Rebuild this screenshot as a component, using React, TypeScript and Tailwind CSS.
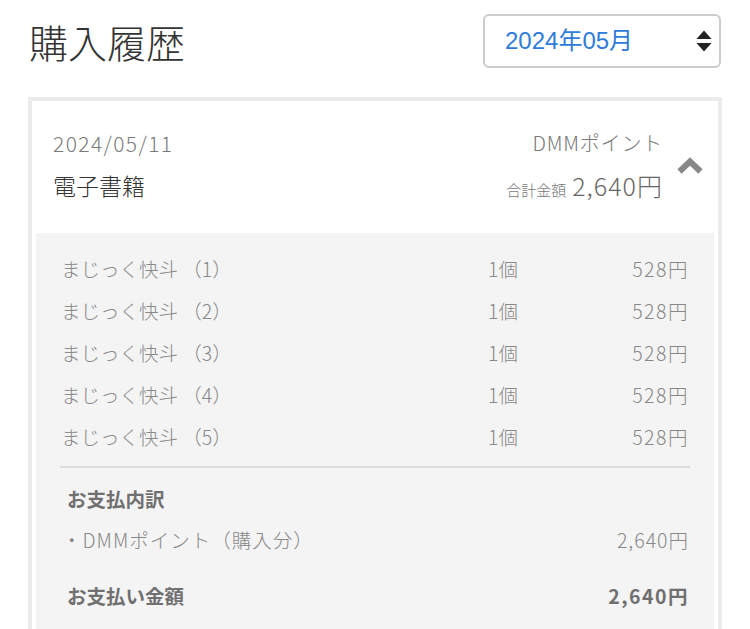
import React from "react";

const items = [1, 2, 3, 4, 5].map((n) => ({ name: `まじっく快斗 （${n}）`, qty: "1個", price: "528円" }));

function ChevronUp() {
  return (
    <svg width="26" height="17" viewBox="0 0 26 17" className="block">
      <path d="M2.5 14.5 L13 4.5 L23.5 14.5" fill="none" stroke="#888888" strokeWidth="6" strokeLinejoin="miter" />
    </svg>
  );
}

function SelectArrows() {
  return (
    <svg width="16" height="22" viewBox="0 0 16 22" className="block">
      <path d="M8 0.5 L15.5 9 L0.5 9 Z" fill="#222" />
      <path d="M0.5 13 L15.5 13 L8 21.5 Z" fill="#222" />
    </svg>
  );
}

export default function App() {
  return (
    <div
      className="w-[750px] h-[629px] overflow-hidden bg-white [text-spacing-trim:space-all]"
      style={{ fontFamily: '"Noto Sans CJK JP", "Liberation Sans", sans-serif' }}
    >
      <div className="flex items-center justify-between pl-[29px] pr-[29px] pt-[14px] h-[68px]">
        <h1 className="text-[39px] leading-none text-[#333] font-light">購入履歴</h1>
        <div className="w-[238px] h-[54px] rounded-[6px] border-2 border-[#cccccc] flex items-center justify-between pl-[20px] pr-[7px]">
          <span
            className="text-[24px] leading-none text-[#2f7bd9]"
            style={{ fontFamily: '"Liberation Sans", "Noto Sans CJK JP", sans-serif' }}
          >
            2024年05月
          </span>
          <SelectArrows />
        </div>
      </div>

      <div className="mx-[28px] mt-[29px] border-4 border-[#ececec] border-b-0 bg-white">
        <div className="flex items-start h-[132px] pl-[21px] pr-[15px] pt-[32px] font-light">
          <div className="flex-1 flex flex-col">
            <div className="text-[21px] text-[#7a7a7a] leading-none tracking-[1.4px]">2024/05/11</div>
            <div className="text-[23px] text-[#333] leading-none mt-[20px]">電子書籍</div>
          </div>
          <div className="flex flex-col items-end">
            <div className="text-[20px] text-[#777] leading-none tracking-[0.8px]">DMMポイント</div>
            <div className="flex items-baseline mt-[20px] leading-none">
              <span className="text-[15px] text-[#777] mr-[6px]">合計金額</span>
              <span className="text-[25px] text-[#666] tracking-[1px]">2,640円</span>
            </div>
          </div>
          <div className="ml-[14px] mt-[24px]">
            <ChevronUp />
          </div>
        </div>

        <div className="mx-1 bg-[#f4f4f4] px-[24px] pt-[15px] pb-[20px] text-[#888] font-light">
          {items.map((it) => (
            <div key={it.name} className="flex items-center h-[42px] text-[19.5px] px-px">
              <span className="flex-1">{it.name}</span>
              <span className="w-[71px]">{it.qty}</span>
              <span className="w-[130px] text-right tracking-[1.5px]">{it.price}</span>
            </div>
          ))}
          <div className="h-[2px] bg-[#dddddd] mt-[8px]" />
          <div className="pl-[7px] pr-px">
            <div className="h-[32px] mt-[15px] flex items-center text-[19.5px] font-semibold text-[#707070]">お支払内訳</div>
            <div className="h-[40px] mt-[5px] flex items-center justify-between text-[19.5px] text-[#888]">
              <span className="-ml-[5px] tracking-[1px]">・DMMポイント（購入分）</span>
              <span className="tracking-[1px]">2,640円</span>
            </div>
            <div className="h-[40px] mt-[16px] flex items-center justify-between text-[19.5px] font-semibold text-[#707070]">
              <span>お支払い金額</span>
              <span className="tracking-[1.5px]">2,640円</span>
            </div>
          </div>
        </div>
      </div>
    </div>
  );
}
